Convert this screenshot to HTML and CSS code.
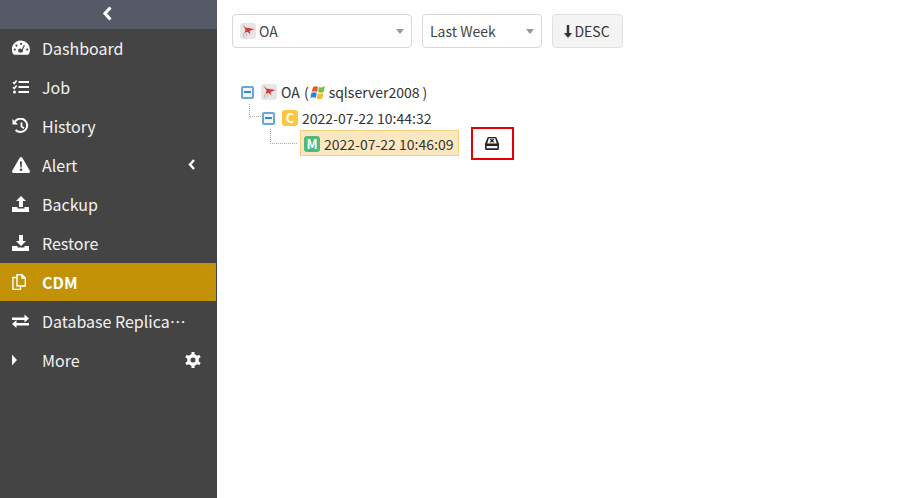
FILE: index.html
```html
<!DOCTYPE html>
<html lang="en">
<head>
  <meta charset="UTF-8">
  <title>CDM</title>
  <link rel="stylesheet" href="styles.css">
</head>
<body>

<div class="sidebar">
  <div class="toggle">
    <svg width="11" height="15" viewBox="0 0 11 15"><path d="M8.500 1.500 3 7.500l5.500 6" fill="none" stroke="#fff" stroke-width="3.200"/></svg>
  </div>

  <div class="nav-item">
    <svg class="nav-icon" viewBox="0 0 18 16"><path fill-rule="evenodd" fill="#fff" d="M9 .5a9 9 0 0 1 9 9c0 1.800-.5 3.400-1.300 4.800-.2.200-.5.400-.7.400H2c-.3 0-.5-.2-.7-.4A9 9 0 0 1 9 .5ZM9 2.700a1.100 1.100 0 1 0 0 2.200 1.100 1.100 0 0 0 0-2.200ZM4.500 4.500a1.100 1.100 0 1 0 0 2.200 1.100 1.100 0 0 0 0-2.200ZM2.800 8.500a1.100 1.100 0 1 0 0 2.200 1.100 1.100 0 0 0 0-2.200ZM15.200 8.500a1.100 1.100 0 1 0 0 2.200 1.100 1.100 0 0 0 0-2.200ZM11.900 4.800 9.800 9.400a2 2 0 1 0-1.900 3.100h2.200a2 2 0 0 0 .7-2.500l2-4.500Z"/></svg>
    <span>Dashboard</span>
  </div>
  <div class="nav-item">
    <svg class="nav-icon" viewBox="0 0 18 16"><path fill="none" stroke="#fff" stroke-width="1.500" d="M1 3.200 2.300 4.500 4.600 1.500M1 8.200 2.300 9.500 4.600 6.500"/><circle cx="2.500" cy="13" r="1.500" fill="#fff"/><path fill="#fff" d="M6.500 2h10.500v2H6.500zM6.500 7h10.500v2H6.500zM6.500 12h10.500v2H6.500z"/></svg>
    <span>Job</span>
  </div>
  <div class="nav-item">
    <svg class="nav-icon" viewBox="0 0 18 16"><path fill="none" stroke="#fff" stroke-width="2" d="M3 3.500A6.700 6.700 0 1 1 3.600 12"/><path fill="#fff" d="M.5 1v5.500H6Z"/><path fill="none" stroke="#fff" stroke-width="1.800" d="M9.500 4.500v4l2.500 1.800"/></svg>
    <span>History</span>
  </div>
  <div class="nav-item">
    <svg class="nav-icon" viewBox="0 0 18 16"><path fill-rule="evenodd" fill="#fff" d="M9 0c.6 0 1 .3 1.300.8l7.500 13c.5 1-.2 2.200-1.300 2.200h-15C.4 16-.3 14.800.2 13.800l7.500-13C8 .3 8.400 0 9 0ZM8 4.500l.3 6h1.400l.3-6ZM9 11.500a1.300 1.300 0 1 0 0 2.600 1.300 1.300 0 0 0 0-2.600Z"/></svg>
    <span>Alert</span>
    <svg class="nav-arrow" width="8" height="11" viewBox="0 0 8 11"><path d="M6 1 2 5.500 6 10" fill="none" stroke="#fff" stroke-width="2.400"/></svg>
  </div>
  <div class="nav-item">
    <svg class="nav-icon" viewBox="0 0 18 16"><path fill="#fff" d="M9 0l5 5h-3v6H7V5H4ZM0 11h5.500v1.500h7V11H17v5H0Z"/></svg>
    <span>Backup</span>
  </div>
  <div class="nav-item">
    <svg class="nav-icon" viewBox="0 0 18 16"><path fill="#fff" d="M7 0h4v6h3l-5 5-5-5h3ZM0 11h5.500v1.500h7V11H17v5H0Z"/></svg>
    <span>Restore</span>
  </div>
  <div class="nav-item active">
    <svg class="nav-icon" viewBox="0 0 18 16"><path fill="none" stroke="#fff" stroke-width="1.400" d="M5 3.500H.9v12H8.500V12M5 .7h5l3.300 3.300V12H5ZM10 .7V4h3.300"/></svg>
    <span>CDM</span>
  </div>
  <div class="nav-item">
    <svg class="nav-icon" viewBox="0 0 18 16"><path fill="#fff" d="M0 4h12.500V1l4.500 4-4.500 4V6.500H0ZM17 9.500H4.500v-3L0 10.500l4.500 4v-2.500H17Z" transform="translate(0 .5)"/></svg>
    <span>Database Replica<span lang="zh-CN">…</span></span>
  </div>
  <div class="nav-item">
    <svg class="nav-icon" viewBox="0 0 18 16"><path fill="#fff" d="M0 2.500 5 8l-5 5.500Z"/></svg>
    <span>More</span>
    <svg class="gear" width="16" height="16" viewBox="0 0 16 16"><circle cx="8" cy="8" r="4.200" fill="none" stroke="#fff" stroke-width="3.400"/><path fill="none" stroke="#fff" stroke-width="3" d="M8 0v3M8 13v3M1 4l2.600 1.500M12.400 10.500 15 12M1 12l2.600-1.500M12.400 5.500 15 4"/></svg>
  </div>
</div>

<div class="main">
  <div class="toolbar">
    <div class="select select-db">
      <svg class="db-icon" width="16" height="16" viewBox="0 0 16 16"><rect width="16" height="16" rx="3" fill="#e6e6e6"/><path fill="#d63a3a" d="M2.500 1.500 5.500 4.500 14.500 6 9.500 8 10.500 11.500 7.500 8.700 4.500 10 5.500 6.500Z"/><path d="M4.500 10c-1.500 1-1.500 3 .5 4.500M7 10c-1 1-1 2 0 3" fill="none" stroke="#b4b4b4"/></svg>
      <span>OA</span>
      <i class="caret"></i>
    </div>
    <div class="select select-range">
      <span>Last Week</span>
      <i class="caret"></i>
    </div>
    <button class="sort-btn"><svg width="8" height="14" viewBox="0 0 8 14"><path fill="#333" d="M2.800 1h2.400v8H8l-4 5-4-5h2.800Z"/></svg>DESC</button>
  </div>

  <div class="tree">
    <div class="tree-row">
      <i class="expander"></i>
      <svg class="db-icon" width="16" height="16" viewBox="0 0 16 16"><rect width="16" height="16" rx="3" fill="#e6e6e6"/><path fill="#d63a3a" d="M2.500 1.500 5.500 4.500 14.500 6 9.500 8 10.500 11.500 7.500 8.700 4.500 10 5.500 6.500Z"/><path d="M4.500 10c-1.500 1-1.500 3 .5 4.500M7 10c-1 1-1 2 0 3" fill="none" stroke="#b4b4b4"/></svg>
      <span class="tree-text owner">OA (</span>
      <svg class="win-icon" width="16" height="16" viewBox="0 0 16 16"><path fill="#e2552f" d="M3 3.500C4.500 2 6 2 8 3L7 8C5 7 3.500 7 1.500 8Z"/><path fill="#86b93a" d="M9 2.800C11 3.800 13 3.500 15 2L13.800 7.500C12 9 10 9 8 8Z"/><path fill="#2f7fd6" d="M1.300 9C3.300 8 5 8 6.800 9L5.800 14C4 13 2.500 13 .5 14Z"/><path fill="#f4b92e" d="M7.800 9.200C9.800 10 11.800 10 13.600 8.700L12.500 14C10.500 15.500 8.800 15.500 6.800 14.500Z"/></svg>
      <span class="tree-text">sqlserver2008 )</span>
    </div>
    <div class="tree-row level-1">
      <i class="connector"></i>
      <i class="expander"></i>
      <b class="badge badge-c">C</b>
      <span class="tree-text">2022-07-22 10:44:32</span>
    </div>
    <div class="tree-row level-2">
      <i class="connector"></i>
      <div class="tree-selected">
        <b class="badge badge-m">M</b>
        <span class="tree-text">2022-07-22 10:46:09</span>
      </div>
      <div class="action-box">
        <svg width="14" height="13" viewBox="0 0 14 13"><path fill="#222" d="M3.500 0h7c.5 0 .8.200 1 .6L14 7v4.500c0 .8-.6 1.500-1.500 1.500h-11C.6 13 0 12.300 0 11.500V7L2.500.6C2.700.2 3 0 3.500 0Z"/><path fill="#f4f4f4" d="M3.800 1.300h6.400L11.800 6.500H2.200ZM1.500 9h11v2.300h-11Z"/><path fill="none" stroke="#222" stroke-width="1.300" d="M5.300 2 8.700 5.400M8.700 2 5.300 5.400"/></svg>
      </div>
    </div>
  </div>
</div>

</body>
</html>
```

FILE: styles.css
```css
body {
  margin: 0;
  height: 498px;
  overflow: hidden;
  display: flex;
  background: #fff;
  font-family: "Noto Sans CJK SC", "Noto Sans", sans-serif;
  color: #333;
}
.sidebar {
  width: 217px;
  flex: none;
  background: #444;
  color: #fff;
  font-size: 16px;
}
.toggle {
  height: 29px;
  padding: 0 3px 2px 0;
  box-sizing: border-box;
  background: #555a66;
  display: flex;
  align-items: center;
  justify-content: center;
}
.nav-item {
  height: 39px;
  box-sizing: border-box;
  padding: 0 16px 2px 12px;
  display: flex;
  align-items: center;
  color: #f2f2f2;
}
.nav-item.active {
  height: 38px;
  margin: 0 1px 1px 0;
  padding-bottom: 1px;
  background: #c29105;
  color: #fff;
  font-weight: 700;
}
.nav-icon {
  width: 18px;
  height: 16px;
  flex: none;
  margin-right: 12px;
}
.nav-arrow {
  margin-left: auto;
  margin-right: 5px;
}
.gear {
  margin-left: auto;
}
.main {
  flex: 1;
  padding: 14px 15px;
  font-size: 14px;
}
.toolbar {
  display: flex;
  gap: 10px;
}
.select {
  height: 34px;
  box-sizing: border-box;
  border: 1px solid #d6d6dc;
  border-radius: 4px;
  display: flex;
  align-items: center;
  padding-left: 7px;
  color: #444;
  position: relative;
}
.select-db {
  width: 180px;
}
.select-db .db-icon {
  margin-right: 3px;
}
.select-range {
  width: 120px;
}
.caret {
  position: absolute;
  right: 7px;
  top: 14px;
  border-left: 4px solid transparent;
  border-right: 4px solid transparent;
  border-top: 5px solid #999;
}
.sort-btn {
  width: 71px;
  height: 34px;
  box-sizing: border-box;
  border: 1px solid #e0e0e0;
  border-radius: 4px;
  background: #f4f4f4;
  color: #333;
  font: inherit;
  padding: 0 1px 0 0;
  display: flex;
  align-items: center;
  justify-content: center;
  gap: 2px;
}
.tree {
  margin-top: 31px;
  padding-left: 9px;
}
.tree-row {
  height: 26px;
  display: flex;
  align-items: center;
  position: relative;
}
.level-1 {
  padding-left: 21px;
}
.level-2 {
  padding-left: 59px;
}
.expander {
  width: 13px;
  height: 13px;
  box-sizing: border-box;
  border: 2px solid #6aa7d6;
  border-radius: 2px;
  background: #eef5fb;
  position: relative;
  flex: none;
  margin-right: 7px;
}
.expander::after {
  content: "";
  position: absolute;
  left: 1px;
  right: 1px;
  top: 3.500px;
  height: 2px;
  background: #4585b8;
}
.connector {
  position: absolute;
  border-left: 1px dotted #aaa;
  border-bottom: 1px dotted #aaa;
}
.level-1 .connector {
  left: 8px;
  top: -1px;
  width: 11px;
  height: 12px;
}
.level-2 .connector {
  left: 29px;
  top: -2px;
  width: 26px;
  height: 14px;
}
.db-icon {
  flex: none;
  margin-right: 4px;
}
.win-icon {
  margin: 0 3px 0 1px;
  flex: none;
}
.tree-text {
  white-space: pre;
}
.owner {
  word-spacing: 1px;
}
.badge {
  width: 16px;
  height: 16px;
  border-radius: 3px;
  color: #fff;
  font-size: 13px;
  line-height: 16px;
  text-align: center;
  flex: none;
  margin-right: 4px;
}
.badge-c {
  background: #fcc73d;
}
.badge-m {
  background: #4cba7f;
}
.tree-selected {
  width: 159px;
  height: 26px;
  margin-top: -2px;
  padding: 2px 0 0 3px;
  box-sizing: border-box;
  border: 1px solid #f8cd7e;
  background: #fce8c0;
  display: flex;
  align-items: center;
}
.action-box {
  width: 43px;
  height: 33px;
  margin: -1px 0 0 12px;
  padding-right: 2px;
  box-sizing: border-box;
  border: 2px solid #e60000;
  display: flex;
  align-items: center;
  justify-content: center;
}
```
